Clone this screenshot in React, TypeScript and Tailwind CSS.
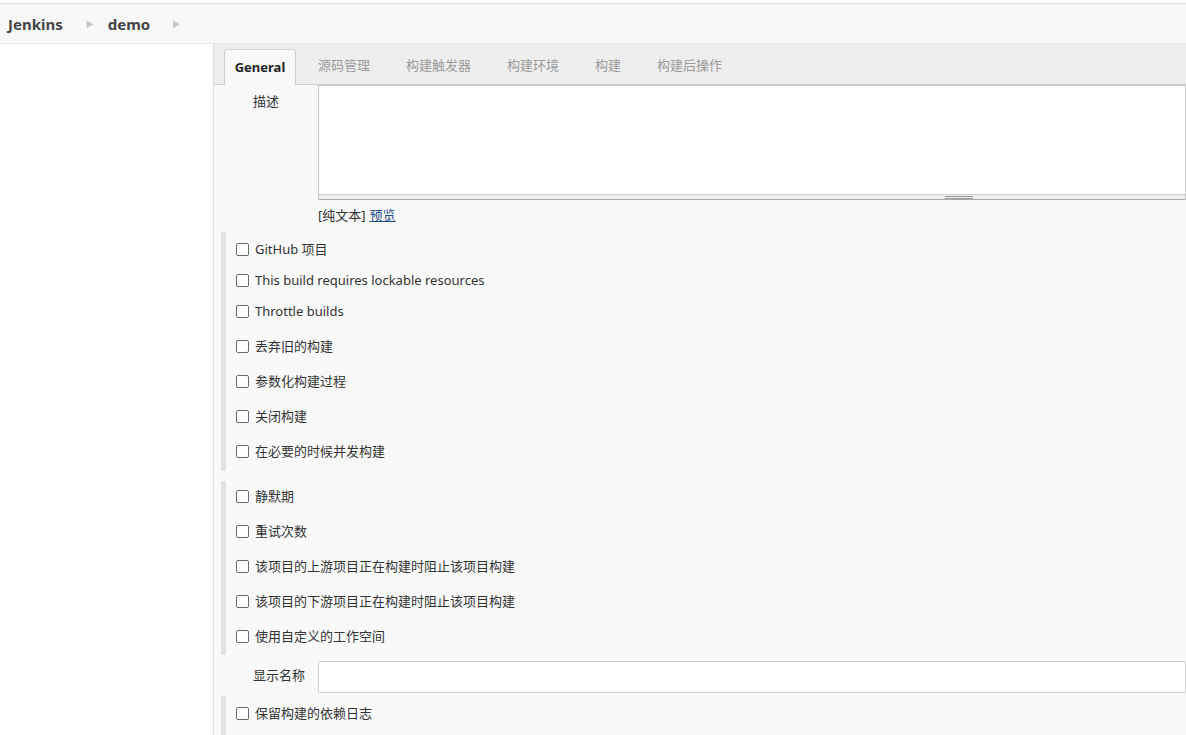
import React from "react";

const font = { fontFamily: '"Noto Sans", "Noto Sans CJK SC", sans-serif' };

function Check({ label, h }: { label: string; h: string }) {
  return (
    <div className={`flex items-center ${h} pl-[10px]`}>
      <span className="w-[13px] h-[13px] border border-[#6a6a6a] rounded-[2px] bg-white shrink-0" />
      <span className="ml-[6px] text-[13px] text-[#333] leading-none">{label}</span>
    </div>
  );
}

function Section({ children, className = "" }: { children: React.ReactNode; className?: string }) {
  return (
    <div className={`ml-[7px] border-l-[5px] border-[#e3e3e3] ${className}`}>{children}</div>
  );
}

export default function App() {
  return (
    <div className="w-[1186px] h-[735px] overflow-hidden bg-white flex flex-col" style={font}>
      <div className="h-[3px] bg-white" />
      <div className="h-[41px] bg-[#f8f8f8] border-t border-[#dcdcdc] border-b border-b-[#e8e8e8] flex items-center pl-[8px] shrink-0">
        <span className="text-[15px] font-bold text-[#444] pt-[1px]">Jenkins</span>
        <span className="ml-[23px] text-[8px] text-[#c4c4c4]">▶</span>
        <span className="ml-[14px] text-[15px] font-bold text-[#444] pt-[1px]">demo</span>
        <span className="ml-[22px] text-[8px] text-[#c4c4c4]">▶</span>
      </div>
      <div className="flex flex-1 min-h-0">
        <div className="w-[214px] bg-white border-r border-[#dddddd] shrink-0" />
        <div className="flex-1 bg-[#f9f9f9] flex flex-col min-w-0">
          <div className="h-[41px] bg-[#eeeeee] border-b border-[#d0d0d0] flex items-end shrink-0">
            <div className="ml-[10px] h-[36px] w-[72px] -mb-px bg-[#f9f9f9] border border-[#cfcfcf] border-b-0 rounded-t-[4px] flex items-center justify-center text-[13px] font-bold text-[#222]">
              General
            </div>
            <div className="flex items-center h-[36px] text-[13px] text-[#9a9a9a] ml-[22px] gap-[36px]">
              <span>源码管理</span>
              <span>构建触发器</span>
              <span>构建环境</span>
              <span>构建</span>
              <span>构建后操作</span>
            </div>
          </div>
          <div className="flex">
            <div className="w-[104px] pl-[39px] pt-[7px] text-[13px] text-[#333] shrink-0">描述</div>
            <div className="flex-1 flex flex-col">
              <div className="h-[115px] border border-[#c8c8c8] border-b-0 bg-white flex flex-col">
                <div className="flex-1" />
                <div className="h-[6px] bg-[#efefef] border-t border-[#d0d0d0] border-b border-b-[#aaa] relative">
                  <div className="absolute left-[626px] top-[1px] w-[28px] h-[1px] bg-[#999]" />
                  <div className="absolute left-[626px] top-[3px] w-[28px] h-[1px] bg-[#999]" />
                </div>
              </div>
              <div className="h-[31px] flex items-center text-[13px] text-[#333]">
                [纯文本]<span className="ml-[4px] text-[#204a87] underline">预览</span>
              </div>
            </div>
          </div>
          <Section className="mt-[1px] pb-[4px] pt-[2px]">
            <Check label="GitHub 项目" h="h-[31px]" />
            <Check label="This build requires lockable resources" h="h-[31px]" />
            <Check label="Throttle builds" h="h-[31px]" />
            <Check label="丢弃旧的构建" h="h-[35px] pt-[4px]" />
            <Check label="参数化构建过程" h="h-[35px] pt-[4px]" />
            <Check label="关闭构建" h="h-[35px] pt-[4px]" />
            <Check label="在必要的时候并发构建" h="h-[35px] pt-[4px]" />
          </Section>
          <Section className="mt-[10px] pb-[4px]">
            <Check label="静默期" h="h-[30px]" />
            <Check label="重试次数" h="h-[35px] pt-[5px]" />
            <Check label="该项目的上游项目正在构建时阻止该项目构建" h="h-[35px] pt-[5px]" />
            <Check label="该项目的下游项目正在构建时阻止该项目构建" h="h-[35px] pt-[5px]" />
            <Check label="使用自定义的工作空间" h="h-[35px] pt-[5px]" />
          </Section>
          <div className="flex items-center h-[42px] pt-[2px]">
            <div className="w-[104px] pl-[39px] pb-[1px] text-[13px] text-[#333] shrink-0">显示名称</div>
            <div className="flex-1 h-[32px] border border-[#cfcfcf] bg-white rounded-l-[2px]" />
          </div>
          <Section className="h-[40px]">
            <Check label="保留构建的依赖日志" h="h-[32px] pt-[2px]" />
          </Section>
        </div>
      </div>
    </div>
  );
}
